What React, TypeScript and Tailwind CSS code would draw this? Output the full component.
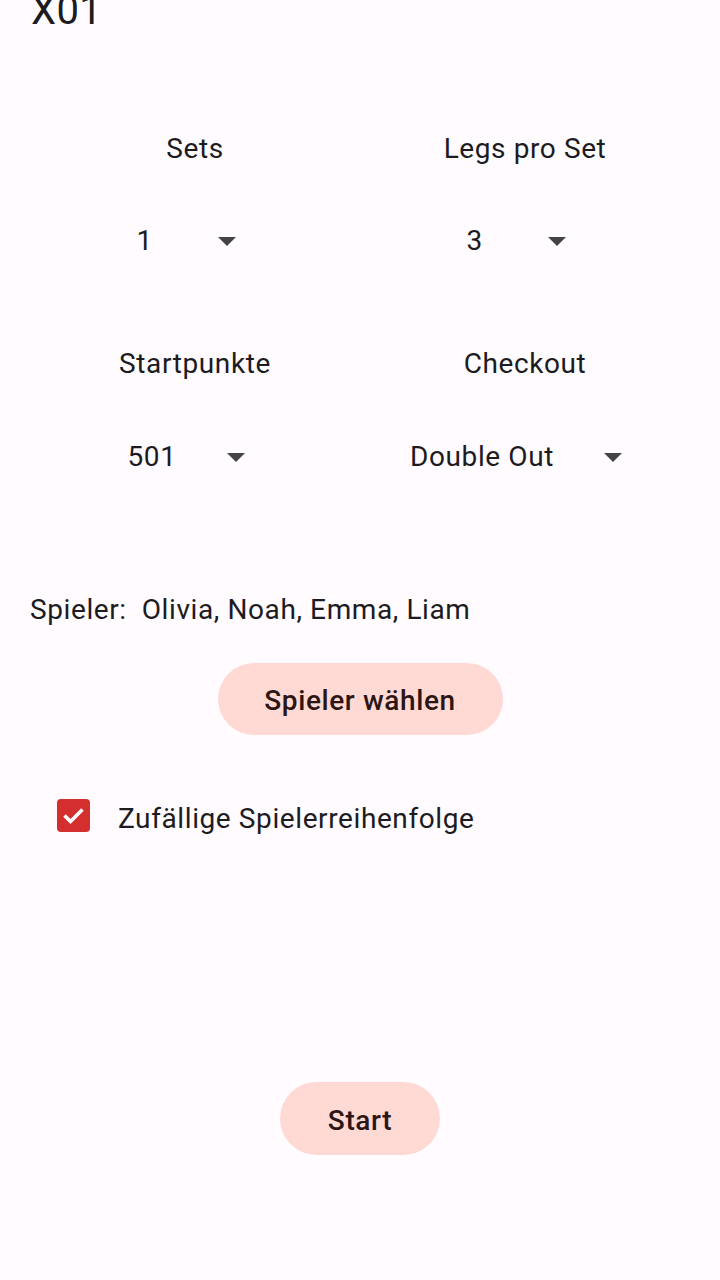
import React from "react";

function Arrow() {
  return (
    <svg width="18" height="9" viewBox="0 0 18 9" className="shrink-0">
      <path d="M0 0 L18 0 L9 9 Z" fill="#444444" />
    </svg>
  );
}

function Dropdown({ value }: { value: string }) {
  return (
    <div className="flex items-center">
      <span className="min-w-[31px] text-left">{value}</span>
      <span className="ml-[50px] flex items-center">
        <Arrow />
      </span>
      <span className="w-[18px]" />
    </div>
  );
}

export default function App() {
  return (
    <div
      className="w-[720px] h-[1280px] overflow-hidden bg-[#fffbfe] text-[#1c1b1f] tracking-[0.6px]"
      style={{ fontFamily: "Roboto, 'Noto Sans', sans-serif" }}
    >
      <div className="mt-[-9px] h-[40px] pl-[31px] text-[40px] leading-[40px] tracking-[0.4px]">X01</div>

      <div className="mt-[88px] grid grid-cols-2 px-[30px] text-[28px]">
        <div className="flex h-[60px] items-center justify-center">Sets</div>
        <div className="flex h-[60px] items-center justify-center">Legs pro Set</div>
        <div className="mt-[32px] flex h-[60px] items-center justify-center">
          <Dropdown value="1" />
        </div>
        <div className="mt-[32px] flex h-[60px] items-center justify-center">
          <Dropdown value="3" />
        </div>
        <div className="mt-[63px] flex h-[60px] items-center justify-center">Startpunkte</div>
        <div className="mt-[63px] flex h-[60px] items-center justify-center">Checkout</div>
        <div className="mt-[33px] flex h-[60px] items-center justify-center">
          <Dropdown value="501" />
        </div>
        <div className="mt-[33px] flex h-[60px] items-center justify-center">
          <Dropdown value="Double Out" />
        </div>
      </div>

      <div className="mt-[102px] flex h-[40px] items-center pl-[30px] pt-[2px] text-[28px]">
        <span>Spieler:</span>
        <span className="ml-[15px]">Olivia, Noah, Emma, Liam</span>
      </div>

      <div className="mt-[34px] flex justify-center">
        <button className="flex h-[72px] w-[285px] items-center justify-center rounded-full bg-[#ffdad5] pt-[4px] text-[28px] font-medium tracking-[0.6px] text-[#2c1512]">
          Spieler wählen
        </button>
      </div>

      <div className="mt-[56px] flex h-[48px] items-center pl-[57px] text-[28px]">
        <span className="flex h-[33px] w-[33px] items-center justify-center rounded-[4px] bg-[#d32f2f]">
          <svg width="33" height="33" viewBox="0 0 33 33">
            <path d="M7.5 16.5 L13.5 22.5 L25.5 10.5" fill="none" stroke="white" strokeWidth="3.6" />
          </svg>
        </span>
        <span className="ml-[28px] pt-[8px]">Zufällige Spielerreihenfolge</span>
      </div>

      <div className="mt-[243px] flex justify-center">
        <button className="flex h-[73px] w-[160px] items-center justify-center rounded-full bg-[#ffdad5] pt-[4px] text-[28px] font-medium tracking-[0.6px] text-[#2c1512]">
          Start
        </button>
      </div>
    </div>
  );
}
